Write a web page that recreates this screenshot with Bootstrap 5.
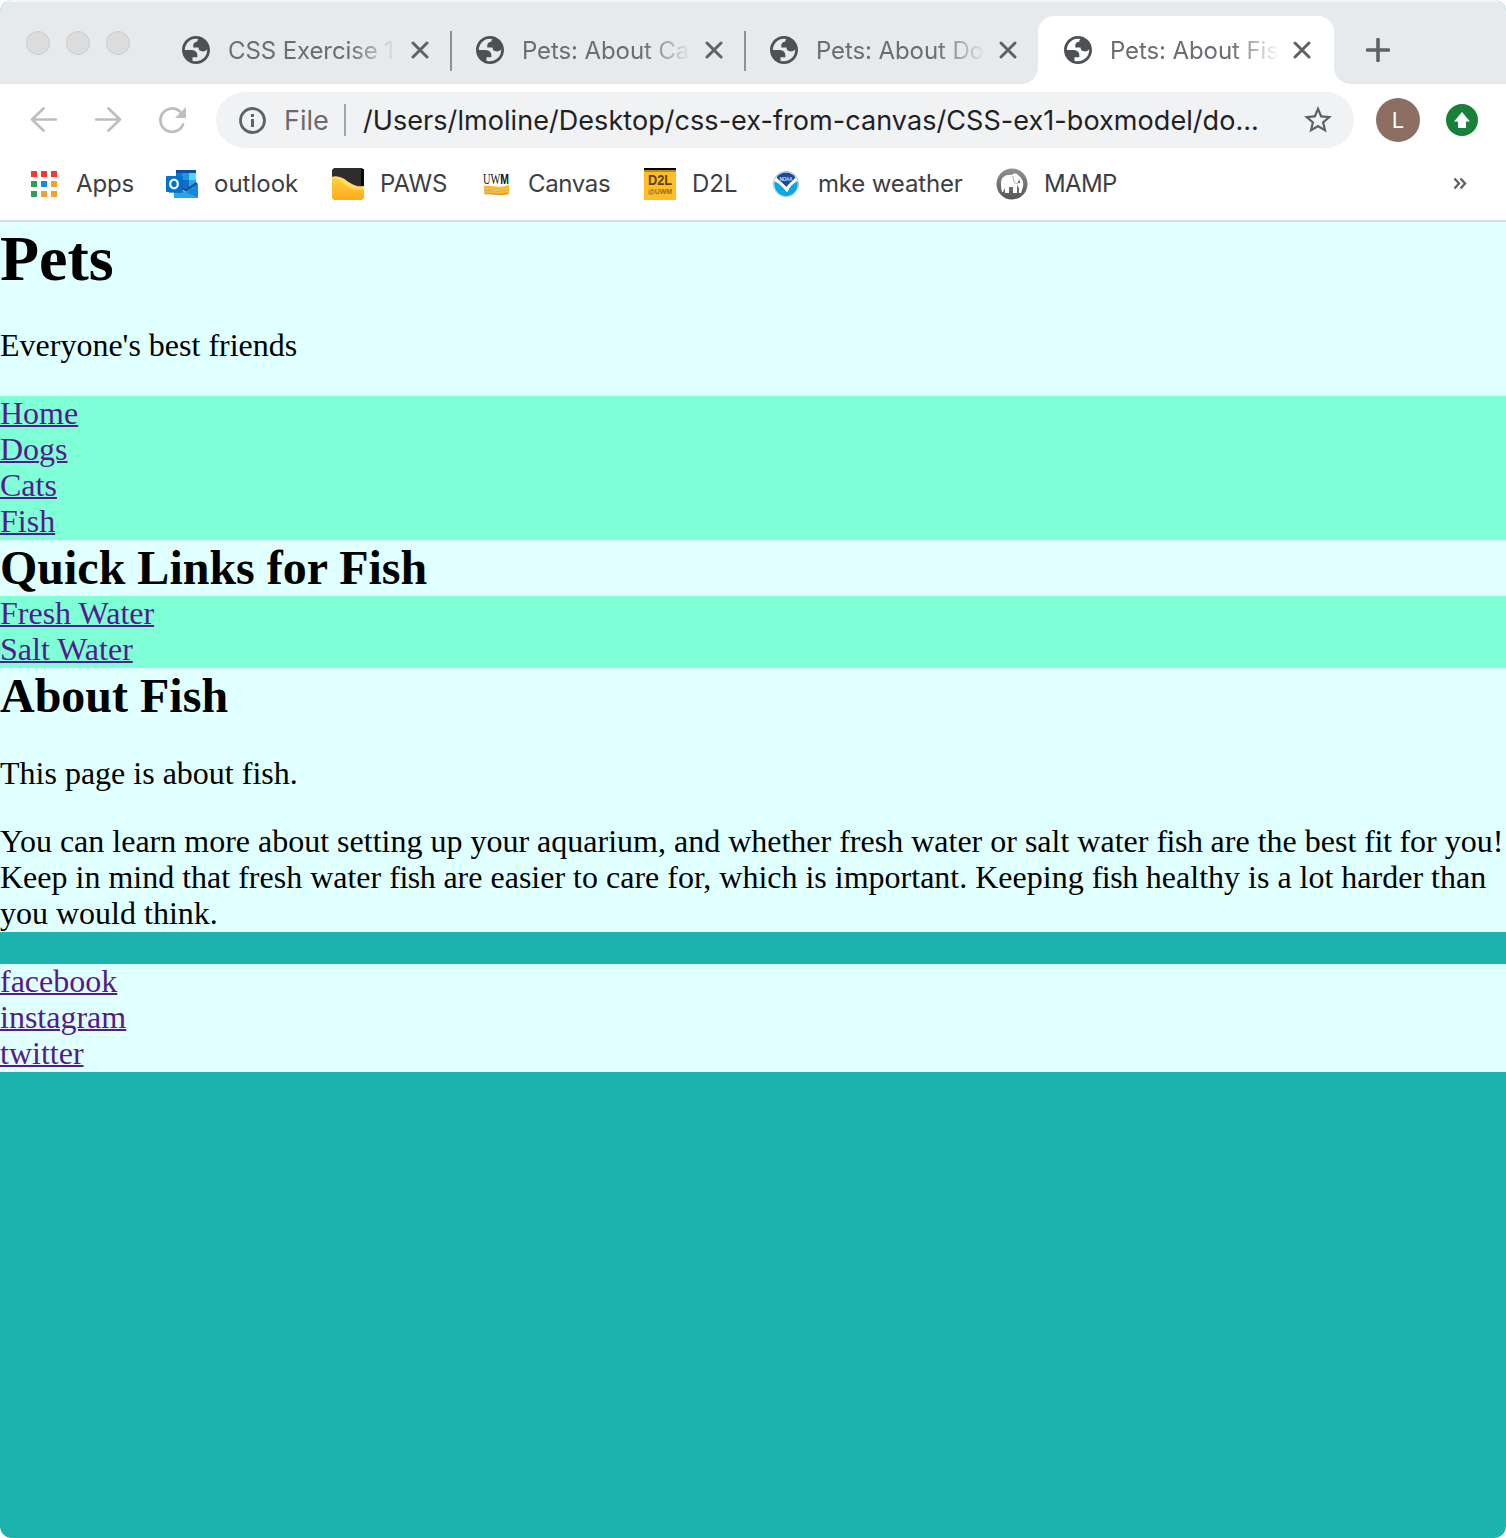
<!DOCTYPE html>
<html lang="en">
<head>
<meta charset="utf-8">
<title>Pets: About Fish</title>
<link href="https://cdn.jsdelivr.net/npm/bootstrap@5.3.0/dist/css/bootstrap.min.css" rel="stylesheet">
<style>
body{margin:0;background:#fff;font-family:Inter,"Liberation Sans",sans-serif}
.window{height:1538px;border-radius:12px;background:#1cb2ae;overflow:hidden}
.tabstrip{height:84px;background:#e6eaed;box-shadow:inset 0 2px 0 #f3f5f6;padding-left:26px}
.lights{gap:16px;width:144px;padding-top:31px;flex:none}
.lights i{width:24px;height:24px;border-radius:50%;background:#dcdcdc;border:1px solid #cbcbcb}
.browser-tab{width:294px;height:68px;margin-top:16px;padding-left:12px;flex:none;color:#6a6e72;position:relative}
.browser-tab svg{flex:none}
.tab-title{width:168px;height:36px;line-height:37px;margin-left:18px;font-size:24px;letter-spacing:-.1px;overflow:hidden;white-space:nowrap;-webkit-mask-image:linear-gradient(90deg,#000 72%,transparent 101%);mask-image:linear-gradient(90deg,#000 72%,transparent 101%)}
.tab-close{margin-left:15px}
.tab-rule{width:2px;height:40px;background:#8d9195;margin:2px 0 0 21px}
.browser-tab.current{width:296px;margin-left:-14px;padding-left:26px;background:#fff;border-radius:16px 16px 0 0}
.current::before,.current::after{content:"";position:absolute;bottom:0;width:16px;height:16px}
.current::before{left:-16px;background:radial-gradient(circle at 0 0,transparent 15.5px,#fff 16px)}
.current::after{right:-16px;background:radial-gradient(circle at 100% 0,transparent 15.5px,#fff 16px)}
.new-tab{margin:38px 0 0 32px}
.toolbar-row{height:72px;background:#fff;padding-left:28px}
.nav-icons{width:188px;gap:32px;flex:none}
.address{width:1138px;height:56px;border-radius:28px;background:#f1f2f4;padding-left:22px;flex:none}
.address span{line-height:40px;white-space:nowrap;padding-top:2px}
.scheme{font-size:27px;color:#686b6f;margin-left:18px;width:60px}
.url-rule{width:2px;height:32px;background:#a1a4a8}
.url{font-size:27px;letter-spacing:.06px;color:#202124;margin-left:17px;width:941px}
.avatar{width:44px;height:44px;border-radius:50%;background:#8d6e63;color:#fff;font-size:22px;margin-left:22px}
.update-icon{margin-left:26px}
.bookmarks{height:66px;background:#fff;border-bottom:2px solid #d9dcdf;padding-left:28px;font-size:24px;letter-spacing:-.15px;color:#3c4043;box-sizing:border-box}
.bookmark{gap:16px;flex:none;white-space:nowrap;height:56px}
.bookmark svg{flex:none;letter-spacing:0}
.bm-apps{width:138px}.bm-outlook{width:166px;letter-spacing:0}.bm-paws{width:148px}.bm-canvas{width:164px;letter-spacing:-.35px}.bm-d2l{width:126px;letter-spacing:0}.bm-weather{width:226px}.bm-mamp{width:457px;letter-spacing:-.6px}
.site{font:32px/36px "Liberation Serif","Times New Roman",serif;color:#000}
.site h1{font-size:64px;line-height:74px;margin:0 0 32px;font-weight:700}
.site h2{font-size:48px;line-height:56px;margin:0;font-weight:700}
.site p{margin:0 0 32px}
.site p,.site a{position:relative;top:-1px}
.site a{display:table;color:#551a8b;text-decoration:underline;text-decoration-thickness:2px}
.masthead{padding-bottom:32px}
.site .masthead p{margin:0}
.site .intro{padding-top:32px}
.tight{letter-spacing:-.45px}
.pale{background:#e0ffff}
.aqua{background:#7effd6}
</style>
<script src="https://cdn.jsdelivr.net/npm/bootstrap@5.3.0/dist/js/bootstrap.bundle.min.js"></script>
</head>
<body>
<svg width="0" height="0" class="position-absolute">
<symbol id="globe" viewBox="2 2 20 20"><path fill="#4d5156" fill-rule="evenodd" d="M12 2C6.475 2 2 6.475 2 12s4.475 10 10 10 10-4.475 10-10S17.525 2 12 2zM4 12h4.4c3.407.022 4.922 1.73 4.543 5.127H9.488v2.47a8.004 8.004 0 0 0 10.498-8.083C19.327 12.504 18.332 13 17 13c-2.137 0-3.206-.916-3.206-2.75h-3.748c-.274-2.728.683-4.092 2.87-4.092 0-.975.327-1.597.811-1.97A8.004 8.004 0 0 0 4 12z"/></symbol>
<symbol id="close" viewBox="0 0 18 18"><path d="M2 2 16 16M16 2 2 16" stroke="#5f6368" stroke-width="3" stroke-linecap="round"/></symbol>
</svg>
<div class="window">
<header>
<div class="tabstrip d-flex">
  <div class="lights d-flex"><i></i><i></i><i></i></div>
  <div class="browser-tab d-flex align-items-center"><svg width="28" height="28"><use href="#globe"/></svg><span class="tab-title">CSS Exercise 1</span><svg class="tab-close" width="18" height="18"><use href="#close"/></svg><span class="tab-rule"></span></div>
  <div class="browser-tab d-flex align-items-center"><svg width="28" height="28"><use href="#globe"/></svg><span class="tab-title">Pets: About Cats</span><svg class="tab-close" width="18" height="18"><use href="#close"/></svg><span class="tab-rule"></span></div>
  <div class="browser-tab d-flex align-items-center"><svg width="28" height="28"><use href="#globe"/></svg><span class="tab-title">Pets: About Dogs</span><svg class="tab-close" width="18" height="18"><use href="#close"/></svg></div>
  <div class="browser-tab current d-flex align-items-center"><svg width="28" height="28"><use href="#globe"/></svg><span class="tab-title">Pets: About Fish</span><svg class="tab-close" width="18" height="18"><use href="#close"/></svg></div>
  <svg class="new-tab" width="24" height="24" viewBox="0 0 24 24"><path d="M12 1.500v21M1.500 12h21" stroke="#5f6368" stroke-width="3.600" stroke-linecap="round"/></svg>
</div>
<div class="toolbar-row d-flex align-items-center">
  <div class="nav-icons d-flex">
    <svg width="32" height="32" fill="none" stroke="#bcbec0" stroke-width="2.700" stroke-linecap="round" stroke-linejoin="round"><path d="M28 15.500H4M15.500 4.500 4 15.500l11.500 11"/></svg>
    <svg width="32" height="32" fill="none" stroke="#bcbec0" stroke-width="2.700" stroke-linecap="round" stroke-linejoin="round"><path d="M4 15.500h24M16.500 4.500 28 15.500l-11.500 11"/></svg>
    <svg width="32" height="32"><path d="M27 20.500A11.700 11.700 0 1 1 24 7.500" fill="none" stroke="#bcbec0" stroke-width="2.800" stroke-linecap="round"/><path d="M30 3v11H19z" fill="#bcbec0"/></svg>
  </div>
  <div class="address d-flex align-items-center">
    <svg width="28" height="28" viewBox="0 0 28 28"><circle cx="14.500" cy="14.500" r="12" fill="none" stroke="#5f6368" stroke-width="2.800"/><path d="M13 13h3v8h-3zM13 8h3v3h-3z" fill="#5f6368"/></svg>
    <span class="scheme">File</span><i class="url-rule"></i>
    <span class="url">/Users/lmoline/Desktop/css-ex-from-canvas/CSS-ex1-boxmodel/do...</span>
    <svg width="28" height="28" viewBox="2 2 20 20"><path fill="#5f6368" d="m22 9.240-7.190-.62L12 2 9.190 8.630 2 9.240l5.460 4.730L5.820 21 12 17.270 18.180 21l-1.630-7.030L22 9.240zM12 15.400l-3.760 2.270 1-4.280-3.320-2.880 4.380-.38L12 6.100l1.710 4.040 4.380.38-3.320 2.880 1 4.280L12 15.400z"/></svg>
  </div>
  <div class="avatar d-flex align-items-center justify-content-center">L</div>
  <svg class="update-icon" width="32" height="32"><circle cx="16" cy="16" r="16" fill="#188038"/><path d="m16 8 8 9.500h-4V24h-8v-6.500H8z" fill="#fff"/></svg>
</div>
<div class="bookmarks d-flex">
  <div class="bookmark bm-apps d-flex align-items-center"><svg width="32" height="32"><path fill="#f9372f" d="M3 3h6v6H3zM13 3h6v6h-6zM23 3h6v6h-6z"/><path fill="#2f9e58" d="M3 13h6v6H3zM3 23h6v6H3z"/><path fill="#1686f8" d="M13 13h6v6h-6z"/><path fill="#f2a12a" d="M23 13h6v6h-6zM13 23h6v6h-6zM23 23h6v6h-6z"/></svg><span>Apps</span></div>
  <div class="bookmark bm-outlook d-flex align-items-center"><svg width="32" height="32"><path fill="#0c4fa0" d="M10 2h20v4H10z"/><path fill="#1178cf" d="M10 5h10v17H10z"/><path fill="#1e96e4" d="M16 5h7v7h-7z"/><path fill="#50d9ff" d="M23 5h7v7h-7z"/><path fill="#0f6fc8" d="M16 12h7v9h-7z"/><path fill="#28a8ea" d="M23 12h7v7h-7z"/><path fill="#0e5596" d="m30 14 2 2-12 8-4-3v-2l4 2z"/><path fill="#1489da" d="M32 16v14H20V24z"/><path fill="#28a8ea" d="M8 30V18l24 12z"/><path fill="#0a5ca8" d="M3 8h14v17H3z" opacity=".6"/><rect y="8" width="16" height="16" rx="1" fill="#0073d1"/><ellipse cx="8" cy="16" rx="3.800" ry="4.300" fill="none" stroke="#fff" stroke-width="2.300"/></svg><span>outlook</span></div>
  <div class="bookmark bm-paws d-flex align-items-center"><svg width="32" height="32"><defs><linearGradient id="gold" x2="0" y2="1"><stop stop-color="#ffd23c"/><stop offset="1" stop-color="#fdaa20"/></linearGradient></defs><path fill="#2d2d2d" d="M2 0h28l2 2v20H0V2z"/><path d="M29 1h3v17h-3z" fill="#090909"/><path fill="url(#gold)" d="M0 9c9-2 13 3 18 6 5 3 9 4 14 3v12l-2 2H2l-2-2z"/><path fill="#ffdf70" d="M0 9c9-2 13 3 18 6 5 3 9 4 14 3v3c-6 2-12 1-17-3S7 10.500 0 10.500z" opacity=".8"/></svg><span>PAWS</span></div>
  <div class="bookmark bm-canvas d-flex align-items-center"><svg width="32" height="32"><text x="3" y="16" font-family="Liberation Serif" font-size="14" fill="#111" textLength="26" lengthAdjust="spacingAndGlyphs">UW<tspan font-family="Liberation Sans" font-weight="700">M</tspan></text><path fill="#fdbb2c" d="M4 18c9-1 13 3 25-1v4c-11 4-16 0-25 1zM4 23c9-1 13 3 25-1v4c-11 3-16-1-25 0z"/><path d="M4 22.500c9-1 13 3 25-1M5 26c9-1 13 2 23-1" fill="none" stroke="#a37b28" stroke-width=".7"/></svg><span>Canvas</span></div>
  <div class="bookmark bm-d2l d-flex align-items-center"><svg width="32" height="32"><path fill="#ffbd2a" d="M0 0h32v32H0z"/><path fill="#000" d="M0 0h32v2H0z"/><path fill="#b88b2d" d="M0 2h32v2H0z"/><text x="4" y="17" font-family="Liberation Sans" font-weight="700" font-size="15" textLength="24" lengthAdjust="spacingAndGlyphs" fill="#5b4212">D2L</text><text x="4" y="26" font-family="Liberation Sans" font-weight="700" font-size="8" textLength="24" lengthAdjust="spacingAndGlyphs" fill="#946c18">@UWM</text></svg><span>D2L</span></div>
  <div class="bookmark bm-weather d-flex align-items-center"><svg width="32" height="32"><circle cx="16" cy="16" r="12.600" fill="#fff" stroke="#a5bdd1" stroke-width="1"/><path d="M6.500 9.500a11.500 11.500 0 0 1 19 0L16.500 20z" fill="#164b9a"/><path d="M4.800 13c4 2 8 6 12 11 2-5 6-8 10.500-11a11.700 11.700 0 1 1-22.500 0z" fill="#0aa7e5"/><path d="M4.500 11c4 0 8 4 12 8 3-4 7-8 11-8-5 4-8 8-10 13-5-6-9-9-13-11z" fill="#fff"/><text x="9.500" y="13" font-family="Liberation Sans" font-size="5" font-weight="700" textLength="13" fill="#c6d8ee">NOAA</text></svg><span>mke weather</span></div>
  <div class="bookmark bm-mamp d-flex align-items-center"><svg width="32" height="32"><defs><linearGradient id="steel" x2="0" y2="1"><stop stop-color="#929292"/><stop offset="1" stop-color="#555"/></linearGradient></defs><circle cx="16" cy="16" r="15.500" fill="url(#steel)"/><path fill="#fff" d="M5 15c0-6 5-9 11-8 2-2 5-2 7 1 3 2 5 6 4 11l-2 6h-2v-5l-2-3v8h-4v-6h-4v6h-4v-5l-2 4H6c-1-3-1-6-1-9z"/><path d="M17 8c0 4 1 7 4 8 2-1 3-3 2-5" fill="none" stroke="#aaa" stroke-width="1"/><path d="M22 13h2v2h-2z" fill="#666"/></svg><span>MAMP</span></div>
  <svg width="14" height="56" viewBox="0 0 14 56" fill="none" stroke="#5f6368" stroke-width="2.400"><path d="m1.500 22.500 4.500 5-4.500 5M7.500 22.500l4.500 5-4.500 5"/></svg>
</div>
</header>
<main class="site">
  <div class="masthead pale"><h1>Pets</h1><p>Everyone's best friends</p></div>
  <nav class="aqua"><a href="#">Home</a><a href="#">Dogs</a><a href="#">Cats</a><a href="#">Fish</a></nav>
  <h2 class="pale">Quick Links for Fish</h2>
  <nav class="aqua"><a href="#">Fresh Water</a><a href="#">Salt Water</a></nav>
  <article class="pale"><h2>About Fish</h2><p class="intro">This page is about fish.</p><p>You can learn more about setting up your aquarium, and whether fresh water or salt water <span class="tight">fish</span> are the best <span class="tight">fit</span> for you! Keep in mind that fresh water <span class="tight">fish</span> are easier to care for, which is important. Keeping <span class="tight">fish</span> healthy is a lot harder than you would think.</p></article>
  <footer class="pale"><a href="#">facebook</a><a href="#">instagram</a><a href="#">twitter</a></footer>
</main>
</div>
</body>
</html>
